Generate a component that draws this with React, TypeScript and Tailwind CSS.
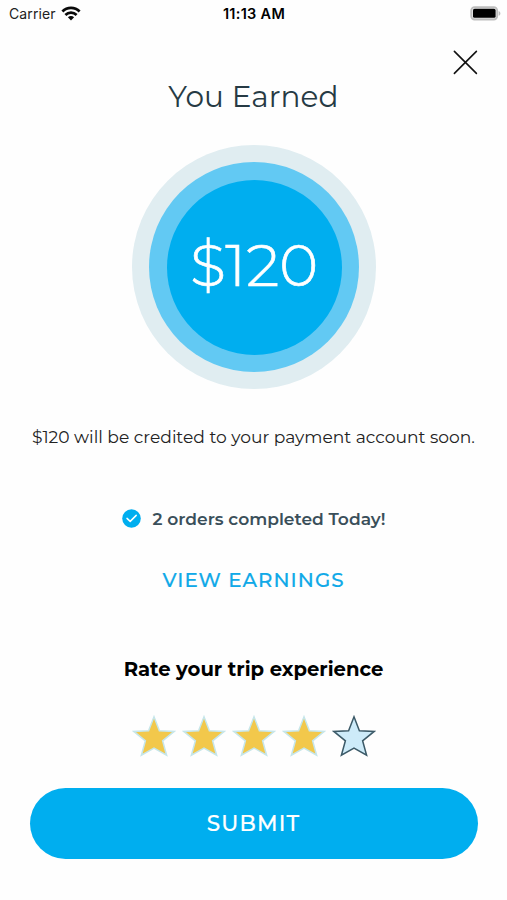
import React, { useState } from 'react';

const WifiIcon = () => (
  <svg width="20" height="16" viewBox="0 0 20 16" fill="none" stroke="#0a0a0a" strokeWidth="2.8">
    <path d="M1.4 5.4C6.2 0.6 13.8 0.6 18.6 5.4" />
    <path d="M4.4 8.9C7.6 5.9 12.4 5.9 15.6 8.9" />
    <path d="M6.9 11.3C8.7 9.6 11.3 9.6 13.1 11.3L10 14.4Z" fill="#0a0a0a" stroke="none" />
  </svg>
);

const BatteryIcon = () => (
  <svg width="31" height="15" viewBox="0 0 31 15">
    <rect x="1.2" y="1.1" width="26" height="12.4" rx="3.4" fill="#e4e4e4" stroke="#bdbdbd" strokeWidth="1.8" />
    <rect x="3" y="2.8" width="22.6" height="9" rx="1.6" fill="#000" />
    <path d="M28.6 4.9C31 5.6 31 9 28.6 9.7Z" fill="#bdbdbd" />
  </svg>
);

const CheckIcon = () => (
  <svg width="19" height="19" viewBox="0 0 19 19" fill="none">
    <circle cx="9.5" cy="9.5" r="9.3" fill="#00aeef" />
    <path d="M5 9.4L8.2 12.4L14.2 6.4" stroke="#fff" strokeWidth="1.5" strokeLinecap="round" strokeLinejoin="round" />
  </svg>
);

const Star = ({ filled }: { filled: boolean }) => (
  <svg width="44" height="42" viewBox="0 0 44 42">
    <path
      d="M22 1.8L27.4 15.7L42.2 16.4L30.6 25.8L34.6 40.2L22 33L9.4 40.2L13.4 25.8L1.8 16.4L16.6 15.7Z"
      fill={filled ? '#f2c84b' : '#cdebf9'}
      stroke={filled ? '#c6e6ea' : '#3c5a68'}
      strokeWidth="1.5"
    />
  </svg>
);

const App: React.FC = () => {
  const [rating, setRating] = useState(4);

  return (
    <div className="w-full h-[900px] bg-[#fefefe] flex flex-col items-center overflow-hidden font-['Montserrat','Inter',sans-serif] whitespace-nowrap">
      {/* Status bar */}
      <div className="w-full h-[27px] pl-[9px] pr-1.5 grid grid-cols-3 items-center font-['Inter',sans-serif] text-[14px] text-[#222]">
        <div className="flex items-center gap-[5px]">
          <span className="tracking-[0.1px]">Carrier</span>
          <WifiIcon />
        </div>
        <span className="pr-0.5 text-center text-[14.5px] font-semibold tracking-[0.3px] text-black">11:13 AM</span>
        <div className="flex justify-end">
          <BatteryIcon />
        </div>
      </div>

      <div className="w-full flex justify-end pr-[29px] pt-[23px]">
        <button aria-label="Close">
          <svg width="25" height="25" viewBox="0 0 25 25" stroke="#111" strokeWidth="1.6" strokeLinecap="round">
            <path d="M1.4 1.4L23.4 23.4M23.4 1.4L1.4 23.4" />
          </svg>
        </button>
      </div>

      <h1 className="mt-px h-10 leading-10 text-[29.5px] tracking-[0.1px] text-[#263a44]">You Earned</h1>

      {/* Earned amount */}
      <div className="mt-[29px] ml-px size-[244px] shrink-0 rounded-full bg-[#e0edf1] flex items-center justify-center">
        <div className="size-[210px] rounded-full bg-[#62c9f3] flex items-center justify-center">
          <div className="size-[175px] pb-1 rounded-full bg-[#00aeef] flex items-center justify-center">
            <span className="text-[59px] font-light leading-none text-white [-webkit-text-stroke:0.7px_white]">$120</span>
          </div>
        </div>
      </div>

      <p className="mt-9 h-6 leading-6 text-[17.1px] text-[#222]">
        $120 will be credited to your payment account soon.
      </p>

      <div className="mt-[57px] h-6 flex items-center gap-3">
        <CheckIcon />
        <span className="pt-0.5 text-[17.1px] font-semibold text-[#3a4f5a]">2 orders completed Today!</span>
      </div>

      <button className="mt-[38px] h-6 leading-6 text-[19.8px] font-medium tracking-[1.05px] text-[#10a9e8] [-webkit-text-stroke:0.2px_#10a9e8]">
        VIEW EARNINGS
      </button>

      <h2 className="mt-[65px] h-6 leading-6 text-[19.6px] font-bold text-black">
        Rate your trip experience
      </h2>

      <div className="mt-[34px] flex gap-1.5">
        {[1, 2, 3, 4, 5].map((value) => (
          <button key={value} aria-label={`Rate ${value}`} onClick={() => setRating(value)}>
            <Star filled={value <= rating} />
          </button>
        ))}
      </div>

      <button className="mt-[31px] w-[448px] h-[71px] shrink-0 rounded-full bg-[#00aeef] text-[21.5px] font-medium tracking-[1.2px] text-white [-webkit-text-stroke:0.2px_white]">
        SUBMIT
      </button>
    </div>
  );
};

export default App;
